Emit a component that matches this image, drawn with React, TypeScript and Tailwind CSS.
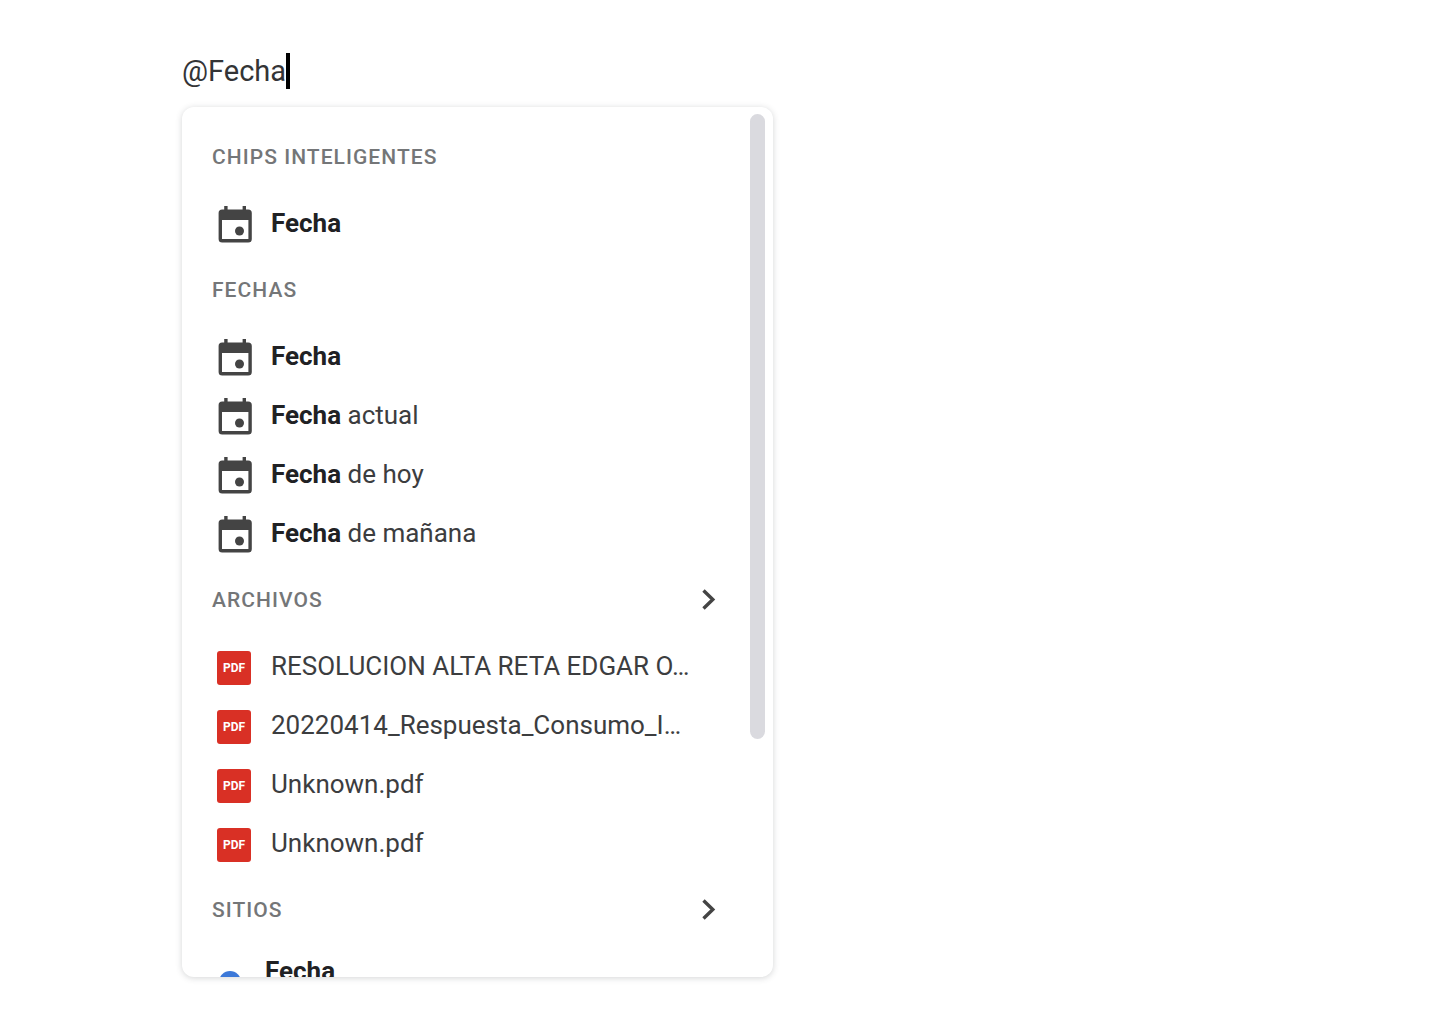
/**
 * Smart chip menu: the "@" query field and the list of suggestions below it.
 */

import { ReactNode, useState } from 'react'

type IconKind = 'date' | 'pdf'

interface Item {
  icon: IconKind
  match?: string
  rest?: string
}

interface Section {
  title: string
  expandable?: boolean
  items: Item[]
}

const SECTIONS: Section[] = [
  {
    title: 'CHIPS INTELIGENTES',
    items: [{ icon: 'date', match: 'Fecha' }],
  },
  {
    title: 'FECHAS',
    items: [
      { icon: 'date', match: 'Fecha' },
      { icon: 'date', match: 'Fecha', rest: ' actual' },
      { icon: 'date', match: 'Fecha', rest: ' de hoy' },
      { icon: 'date', match: 'Fecha', rest: ' de mañana' },
    ],
  },
  {
    title: 'ARCHIVOS',
    expandable: true,
    items: [
      { icon: 'pdf', rest: 'RESOLUCION ALTA RETA EDGAR O…' },
      { icon: 'pdf', rest: '20220414_Respuesta_Consumo_I…' },
      { icon: 'pdf', rest: 'Unknown.pdf' },
      { icon: 'pdf', rest: 'Unknown.pdf' },
    ],
  },
]

function CalendarIcon() {
  return (
    <svg width="36" height="37" viewBox="0 0 36 37" aria-hidden="true">
      <path
        fill="#444444"
        fillRule="evenodd"
        d="M7.2 0h3.4v3.4h15V0H29v3.4h2.2A3.6 3.6 0 0 1 34.8 7v26a3.6 3.6 0 0 1-3.6 3.6h-26A3.6 3.6 0 0 1 1.6 33V7a3.6 3.6 0 0 1 3.6-3.6h2V0zM5 14v18.9h26.4V14H5z"
      />
      <circle cx="22.5" cy="25" r="4.5" fill="#444444" />
    </svg>
  )
}

function PdfIcon() {
  return (
    <span className="flex size-[34px] items-center justify-center rounded-[3px] bg-[#d93025] text-xs leading-none font-bold text-white">
      PDF
    </span>
  )
}

function PinIcon() {
  return (
    <svg width="22" height="32" viewBox="0 0 22 32" aria-hidden="true">
      <path fill="#3c78d8" d="M11 0a11 11 0 0 0-11 11c0 8 11 21 11 21s11-13 11-21A11 11 0 0 0 11 0z" />
    </svg>
  )
}

function SectionHeader({ title, expandable }: { title: string; expandable?: boolean }) {
  return (
    <div className="flex h-[74px] items-center justify-between pr-[33px] pl-[30px]">
      <h2 className="text-[21px] leading-6 font-medium tracking-wider text-[#747678]">{title}</h2>
      {expandable && (
        <button type="button" aria-label={title} className="p-0">
          <svg width="16" height="24" viewBox="0 0 16 24" fill="none" aria-hidden="true">
            <path d="M2.5 2.5l9.3 9-9.3 9" stroke="#444444" strokeWidth="3.4" />
          </svg>
        </button>
      )}
    </div>
  )
}

function Row({ icon, children }: { icon: IconKind; children: ReactNode }) {
  return (
    <button type="button" className="flex h-[59px] w-full items-center pb-0.5 pl-[35px] text-left">
      <span className="flex w-[54px] shrink-0 pt-1">
        {icon === 'date' ? <CalendarIcon /> : <PdfIcon />}
      </span>
      <span className="text-[26px] leading-8 whitespace-nowrap text-[#3c3d3f]">{children}</span>
    </button>
  )
}

export default function App() {
  const [query, setQuery] = useState('@Fecha')

  return (
    <main className="min-h-screen bg-white pt-[53px] pl-[182px] font-[Roboto,sans-serif]">
      <div className="flex h-9 items-center">
        <input
          type="text"
          aria-label="@"
          value={query}
          onChange={e => setQuery(e.target.value)}
          className="field-sizing-content text-[29px] leading-9 text-[#333436] caret-transparent outline-none"
        />
        <span className="h-full w-1 bg-black" />
      </div>

      <div className="mt-[18px] flex h-[calc(100vh-155px)] max-w-[591px] overflow-hidden rounded-xl bg-white shadow-[0_1px_6px_rgba(60,64,67,0.22)]">
        <div className="min-w-0 flex-1 overflow-hidden pt-[13px]">
          {SECTIONS.map(section => (
            <section key={section.title}>
              <SectionHeader title={section.title} expandable={section.expandable} />
              {section.items.map((item, i) => (
                <Row key={i} icon={item.icon}>
                  {item.match && <b className="font-bold text-[#202124]">{item.match}</b>}
                  {item.rest}
                </Row>
              ))}
            </section>
          ))}

          {/* Places are taller rows, the first one runs past the fold */}
          <section>
            <SectionHeader title="SITIOS" expandable />
            <button type="button" className="flex h-20 w-full items-start pt-2 pl-[35px] text-left">
              <span className="flex w-12 shrink-0 pt-4 pl-0.5">
                <PinIcon />
              </span>
              <b className="text-[26px] leading-8 font-bold text-[#202124]">Fecha</b>
            </button>
          </section>
        </div>

        {/* Scrollbar */}
        <div className="mr-2 w-[15px] py-[7px]">
          <div className="h-[73%] rounded-full bg-[#dadadf]" />
        </div>
      </div>
    </main>
  )
}
